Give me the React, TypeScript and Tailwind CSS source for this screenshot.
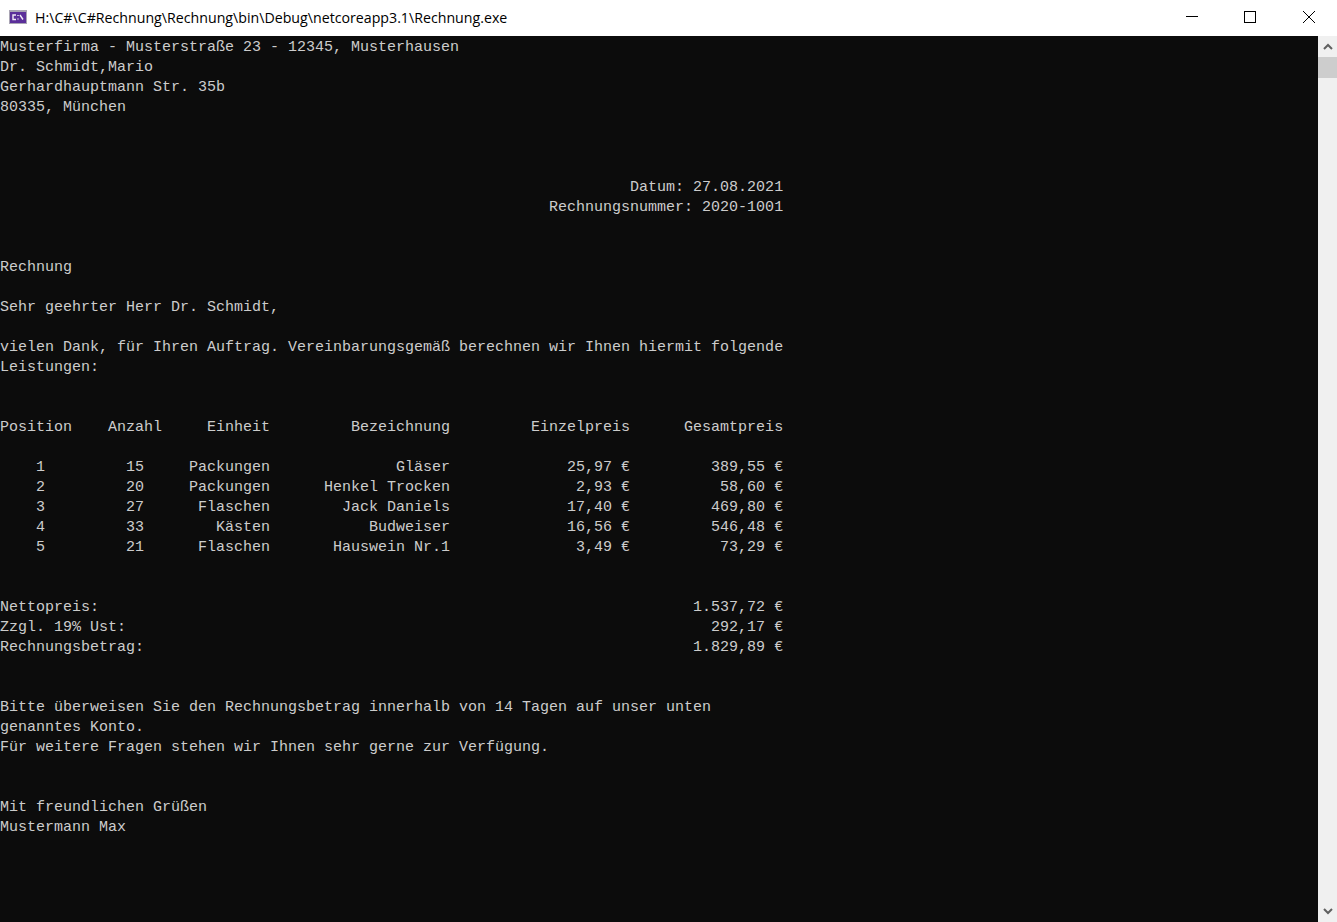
const items = [
  ["1", "15", "Packungen", "Gläser", "25,97 €", "389,55 €"],
  ["2", "20", "Packungen", "Henkel Trocken", "2,93 €", "58,60 €"],
  ["3", "27", "Flaschen", "Jack Daniels", "17,40 €", "469,80 €"],
  ["4", "33", "Kästen", "Budweiser", "16,56 €", "546,48 €"],
  ["5", "21", "Flaschen", "Hauswein Nr.1", "3,49 €", "73,29 €"],
];

function row(c: string[]) {
  return (
    c[0].padStart(5) +
    c[1].padStart(11) +
    c[2].padStart(14) +
    c[3].padStart(20) +
    c[4].padStart(20) +
    c[5].padStart(17)
  );
}

function total(label: string, value: string) {
  return label + value.padStart(87 - label.length);
}

const output = [
  "Musterfirma - Musterstraße 23 - 12345, Musterhausen",
  "Dr. Schmidt,Mario",
  "Gerhardhauptmann Str. 35b",
  "80335, München",
  "",
  "",
  "",
  "Datum: 27.08.2021".padStart(87),
  "Rechnungsnummer: 2020-1001".padStart(87),
  "",
  "",
  "Rechnung",
  "",
  "Sehr geehrter Herr Dr. Schmidt,",
  "",
  "vielen Dank, für Ihren Auftrag. Vereinbarungsgemäß berechnen wir Ihnen hiermit folgende",
  "Leistungen:",
  "",
  "",
  "Position" +
    "Anzahl".padStart(10) +
    "Einheit".padStart(12) +
    "Bezeichnung".padStart(20) +
    "Einzelpreis".padStart(20) +
    "Gesamtpreis".padStart(17),
  "",
  ...items.map(row),
  "",
  "",
  total("Nettopreis:", "1.537,72 €"),
  total("Zzgl. 19% Ust:", "292,17 €"),
  total("Rechnungsbetrag:", "1.829,89 €"),
  "",
  "",
  "Bitte überweisen Sie den Rechnungsbetrag innerhalb von 14 Tagen auf unser unten",
  "genanntes Konto.",
  "Für weitere Fragen stehen wir Ihnen sehr gerne zur Verfügung.",
  "",
  "",
  "Mit freundlichen Grüßen",
  "Mustermann Max",
].join("\n");

function TitleBar() {
  return (
    <div className="flex h-9 shrink-0 items-center bg-white">
      <svg className="ml-[9px] mr-[8px] mb-[2px] shrink-0" width="18" height="14" viewBox="0 0 18 14">
        <rect x="0" y="0" width="18" height="14" fill="#a9a4b4" />
        <rect x="1" y="2" width="16" height="11" fill="#5b2f9a" />
        <path d="M7 5H4v4.5h3" fill="none" stroke="#efeaf6" strokeWidth="1.4" />
        <path d="M9 5v1M9 8.5v1M11 5l3 4.5" fill="none" stroke="#efeaf6" strokeWidth="1.4" />
      </svg>
      <span className="font-['Open_Sans',sans-serif] text-[14.2px] leading-none text-black">
        H:\C#\C#Rechnung\Rechnung\bin\Debug\netcoreapp3.1\Rechnung.exe
      </span>
      <div className="ml-auto flex h-full">
        <button className="flex w-[58px] items-center justify-center pb-[2px]">
          <svg width="12" height="12" viewBox="0 0 12 12">
            <path d="M0 5.5h12" stroke="#000" strokeWidth="1" />
          </svg>
        </button>
        <button className="flex w-[58px] items-center justify-center pb-[2px]">
          <svg width="12" height="12" viewBox="0 0 12 12">
            <rect x="0.5" y="0.5" width="11" height="11" fill="none" stroke="#000" strokeWidth="1" />
          </svg>
        </button>
        <button className="flex w-[58px] items-center justify-center pb-[2px] pl-[2px]">
          <svg width="12" height="12" viewBox="0 0 12 12">
            <path d="M0 0l12 12M12 0L0 12" stroke="#000" strokeWidth="1" />
          </svg>
        </button>
      </div>
    </div>
  );
}

function ScrollBar() {
  return (
    <div className="flex w-[19px] shrink-0 flex-col bg-[#f0f0f0]">
      <div className="flex h-[21px] items-center justify-center pl-px">
        <svg width="10" height="7" viewBox="0 0 10 7">
          <path d="M1 6L5 2L9 6" fill="none" stroke="#606060" strokeWidth="2" />
        </svg>
      </div>
      <div className="h-[21px] bg-[#cdcdcd]" />
      <div className="flex-1" />
      <div className="flex h-[21px] items-center justify-center pl-px">
        <svg width="10" height="7" viewBox="0 0 10 7">
          <path d="M1 1L5 5L9 1" fill="none" stroke="#606060" strokeWidth="2" />
        </svg>
      </div>
    </div>
  );
}

export default function App() {
  return (
    <div className="flex h-screen flex-col overflow-hidden bg-[#0c0c0c]">
      <TitleBar />
      <div className="flex min-h-0 flex-1">
        <pre className="flex-1 overflow-hidden pt-[2px] font-['Liberation_Mono',monospace] text-[15px] leading-[20px] text-[#cccccc]">
          {output}
        </pre>
        <ScrollBar />
      </div>
    </div>
  );
}
